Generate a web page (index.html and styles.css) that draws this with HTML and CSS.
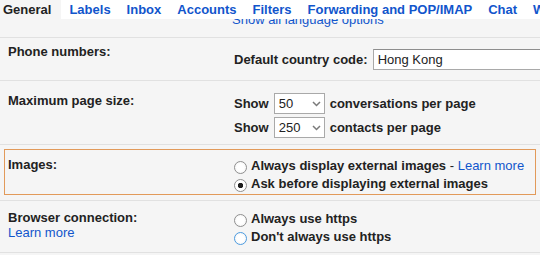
FILE: index.html
```html
<!DOCTYPE html>
<html lang="en">
<head>
    <meta charset="UTF-8">
    <meta name="viewport" content="width=device-width, initial-scale=1.0">
    <title>Settings - General</title>
    <link rel="stylesheet" href="styles.css">
</head>
<body>

    <!-- Settings tabs -->
    <div class="tabs">
        <span class="tab tab-active">General</span>
        <a class="tab" href="#">Labels</a>
        <a class="tab" href="#">Inbox</a>
        <a class="tab" href="#">Accounts</a>
        <a class="tab" href="#">Filters</a>
        <a class="tab" href="#">Forwarding and POP/IMAP</a>
        <a class="tab" href="#">Chat</a>
        <a class="tab" href="#">Web Clips</a>
    </div>

    <div class="panel">
        <!-- scrolled, half hidden under the tabs -->
        <div class="lang-row">
            <a class="link lang-link" href="#">Show all language options</a>
        </div>

        <div class="row row-phone">
            <div class="row-inner">
                <div class="label">Phone numbers:</div>
                <div class="value">
                    <div class="field-line">
                        <label class="field-name" for="country">Default country code:</label>
                        <input class="text-input" type="text" id="country" value="Hong Kong">
                    </div>
                </div>
            </div>
        </div>

        <div class="row row-pagesize">
            <div class="row-inner">
                <div class="label">Maximum page size:</div>
                <div class="value">
                    <div class="field-line">
                        <span class="field-name">Show</span>
                        <span class="select">
                            <span>50</span>
                            <svg width="9" height="6" viewBox="0 0 9 6"><path d="M1 1 L4.5 4.5 L8 1" fill="none" stroke="#7a7a7a" stroke-width="1.5"/></svg>
                        </span>
                        <span class="field-name">conversations per page</span>
                    </div>
                    <div class="field-line">
                        <span class="field-name">Show</span>
                        <span class="select">
                            <span>250</span>
                            <svg width="9" height="6" viewBox="0 0 9 6"><path d="M1 1 L4.5 4.5 L8 1" fill="none" stroke="#7a7a7a" stroke-width="1.5"/></svg>
                        </span>
                        <span class="field-name">contacts per page</span>
                    </div>
                </div>
            </div>
        </div>

        <div class="row row-images">
            <div class="row-inner">
                <div class="label">Images:</div>
                <div class="value">
                    <label class="radio-line">
                        <input class="radio" type="radio" name="images">
                        <span>Always display external images</span>
                        <span class="plain">&nbsp;-&nbsp;<a class="link" href="#">Learn more</a></span>
                    </label>
                    <label class="radio-line">
                        <input class="radio" type="radio" name="images" checked>
                        <span>Ask before displaying external images</span>
                    </label>
                </div>
            </div>
        </div>

        <div class="row row-https">
            <div class="row-inner">
                <div class="label">
                    Browser connection:<br>
                    <a class="link plain" href="#">Learn more</a>
                </div>
                <div class="value">
                    <label class="radio-line">
                        <input class="radio" type="radio" name="https">
                        <span>Always use https</span>
                    </label>
                    <label class="radio-line">
                        <input class="radio radio-hover" type="radio" name="https">
                        <span>Don't always use https</span>
                    </label>
                </div>
            </div>
        </div>
    </div>

</body>
</html>
```

FILE: styles.css
```css
/* page */
body {
    margin: 0;
    font-family: "Liberation Sans", Arial, sans-serif;
    font-size: 13px;
    color: #222;
    background: #f5f5f5;
}

.link {
    color: #15c;
    text-decoration: none;
}

/* tabs */
.tabs {
    display: flex;
    height: 19px;
    line-height: 19px;
    background: white;
    white-space: nowrap;
    overflow: hidden;
    margin-left: -5px;
}

.tab {
    flex: none;
    padding: 0 8px;
    font-weight: bold;
    color: #15c;
    text-decoration: none;
}

.tab-active {
    color: #222;
    background: #f5f5f5;
    padding-right: 10px;
}

/* settings panel */
.panel {
    background: #f5f5f5;
}

.lang-row {
    height: 18px;
    overflow: hidden;
    border-bottom: 1px solid #e1e1e1;
    padding-left: 232px;
}

.lang-link {
    display: block;
    margin-top: -7px;
    line-height: 15px;
}

.row {
    padding: 0 4px;
    border-bottom: 1px solid #e1e1e1;
}

.row-inner {
    display: flex;
    border: 1px solid transparent;
    padding: 0 3px;
}

.label {
    flex: none;
    width: 226px;
    font-weight: bold;
    line-height: 15px;
}

.label .plain {
    font-weight: normal;
}

.value {
    flex: 1;
    font-weight: bold;
}

.field-line {
    display: flex;
    align-items: center;
    gap: 5px;
    white-space: nowrap;
}

/* phone numbers */
.row-phone .row-inner {
    padding-top: 5px;
    padding-bottom: 9px;
}

.row-phone .value {
    padding-top: 5px;
}

.text-input {
    width: 200px;
    height: 21px;
    box-sizing: border-box;
    border: 1px solid #a9a9a9;
    border-top-color: #8e8e8e;
    padding: 0 4px;
    font-family: "Liberation Sans", Arial, sans-serif;
    font-size: 13px;
    color: #222;
    background: white;
    flex: none;
}

/* page size */
.row-pagesize .row-inner {
    padding-top: 11px;
    padding-bottom: 5px;
}

.row-pagesize .field-line + .field-line {
    margin-top: 3px;
}

.select {
    display: flex;
    align-items: center;
    justify-content: space-between;
    width: 51px;
    height: 21px;
    box-sizing: border-box;
    border: 1px solid #a9a9a9;
    padding: 0 3px 0 4px;
    background: white;
    font-weight: normal;
}

/* images */
.row-images {
    padding-top: 4px;
    padding-bottom: 5px;
}

.row-images .row-inner {
    border-color: #e29a5a;
    padding-top: 7px;
    padding-bottom: 1px;
}

.radio-line {
    display: flex;
    align-items: center;
    height: 18px;
    line-height: 18px;
    white-space: nowrap;
}

.plain {
    font-weight: normal;
}

.radio {
    appearance: none;
    -webkit-appearance: none;
    width: 13px;
    height: 13px;
    margin: 2px 4px 0 0;
    border: 1px solid #8f8f8f;
    border-radius: 50%;
    background: radial-gradient(circle, #fff 40%, #f0f0f0 100%);
    box-sizing: border-box;
    flex: none;
}

.radio:checked {
    background: radial-gradient(circle, #1e1e1e 0 2.4px, #fff 3px);
}

.radio-hover {
    border-color: #4b9be0;
}

/* browser connection */
.row-https .row-inner {
    padding-top: 8px;
    padding-bottom: 5px;
}
```
